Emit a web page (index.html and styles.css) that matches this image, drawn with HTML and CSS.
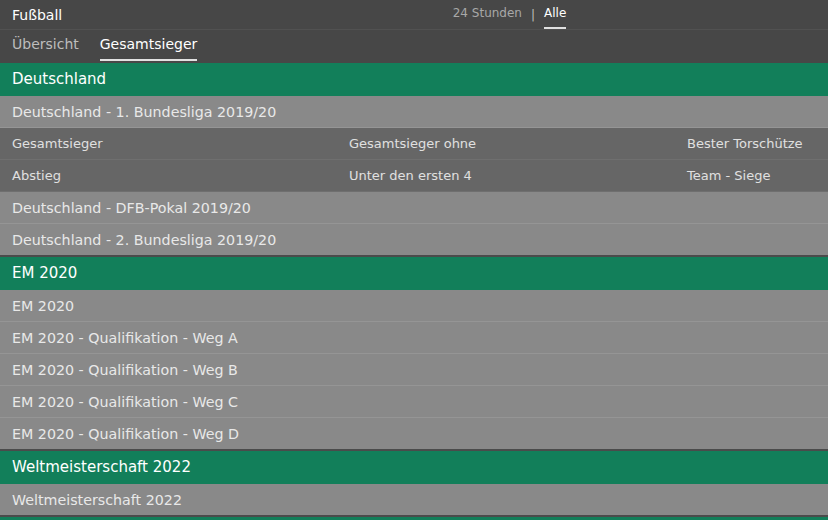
FILE: index.html
```html
<!DOCTYPE html>
<html lang="de">
<head>
<meta charset="utf-8">
<title>Fußball</title>
<link rel="stylesheet" href="styles.css">
</head>
<body>
<div class="page">
  <header class="topbar">
    <div class="title">Fußball</div>
    <nav class="range">
      <span class="range-item">24 Stunden</span>
      <span class="range-sep">|</span>
      <span class="range-item active">Alle</span>
    </nav>
    <div class="spacer"></div>
  </header>
  <nav class="tabs">
    <span class="tab">Übersicht</span>
    <span class="tab active">Gesamtsieger</span>
  </nav>

  <section class="group first">
    <div class="group-head">Deutschland</div>
    <div class="item">Deutschland - 1. Bundesliga 2019/20</div>
    <div class="markets">
      <div class="market">Gesamtsieger</div>
      <div class="market">Gesamtsieger ohne</div>
      <div class="market">Bester Torschütze</div>
      <div class="market">Abstieg</div>
      <div class="market">Unter den ersten 4</div>
      <div class="market">Team - Siege</div>
    </div>
    <div class="item">Deutschland - DFB-Pokal 2019/20</div>
    <div class="item">Deutschland - 2. Bundesliga 2019/20</div>
  </section>

  <section class="group">
    <div class="group-head">EM 2020</div>
    <div class="item">EM 2020</div>
    <div class="item">EM 2020 - Qualifikation - Weg A</div>
    <div class="item">EM 2020 - Qualifikation - Weg B</div>
    <div class="item">EM 2020 - Qualifikation - Weg C</div>
    <div class="item">EM 2020 - Qualifikation - Weg D</div>
  </section>

  <section class="group">
    <div class="group-head">Weltmeisterschaft 2022</div>
    <div class="item">Weltmeisterschaft 2022</div>
  </section>

  <section class="group">
    <div class="group-head"></div>
  </section>
</div>
</body>
</html>
```

FILE: styles.css
```css
html, body {
  margin: 0;
  padding: 0;
  overflow: hidden;
  background: #474747;
}

.page {
  width: 1013px;
  font-family: "DejaVu Sans", Verdana, sans-serif;
  font-size: 14px;
  color: #e4e4e4;
}

.topbar {
  height: 29px;
  display: grid;
  grid-template-columns: 1fr auto 1fr;
  align-items: center;
  background: #474747;
  border-bottom: 1px solid #515151;
}

.title {
  padding-left: 12px;
  color: #ffffff;
  font-size: 14px;
}

.range {
  display: flex;
  align-items: center;
  gap: 9px;
  height: 29px;
  font-size: 12px;
  padding-left: 6px;
}

.range-item {
  color: #a8a8a8;
  height: 29px;
  line-height: 27px;
  box-sizing: border-box;
}

.range-item.active {
  color: #ffffff;
  border-bottom: 2px solid #e0e0e0;
}

.range-sep {
  color: #bdbdbd;
}

.tabs {
  height: 33px;
  display: flex;
  gap: 21px;
  padding-left: 12px;
  background: #474747;
}

.tab {
  color: #bdbdbd;
  line-height: 29px;
  height: 31px;
  box-sizing: border-box;
  font-size: 14px;
}

.tab.active {
  color: #ffffff;
  border-bottom: 2px solid #e2e2e2;
}

.group {
  border-top: 1px solid #4b4b4b;
}

.group.first {
  border-top: none;
}

.group-head {
  height: 33px;
  line-height: 32px;
  padding-left: 12px;
  background: #127f5a;
  color: #ffffff;
  font-size: 15px;
}

.item {
  height: 31px;
  line-height: 32px;
  padding-left: 12px;
  background: #898989;
  border-bottom: 1px solid #959595;
  color: #e8e8e8;
  font-size: 14.25px;
}

.group .item:last-child {
  border-bottom-color: #4b4b4b;
}

.markets {
  display: grid;
  grid-template-columns: 337px 338px 1fr;
  background: #666666;
  font-size: 13px;
}

.market {
  height: 31px;
  line-height: 31px;
  padding-left: 12px;
  border-bottom: 1px solid #6f6f6f;
  color: #e0e0e0;
}
```
